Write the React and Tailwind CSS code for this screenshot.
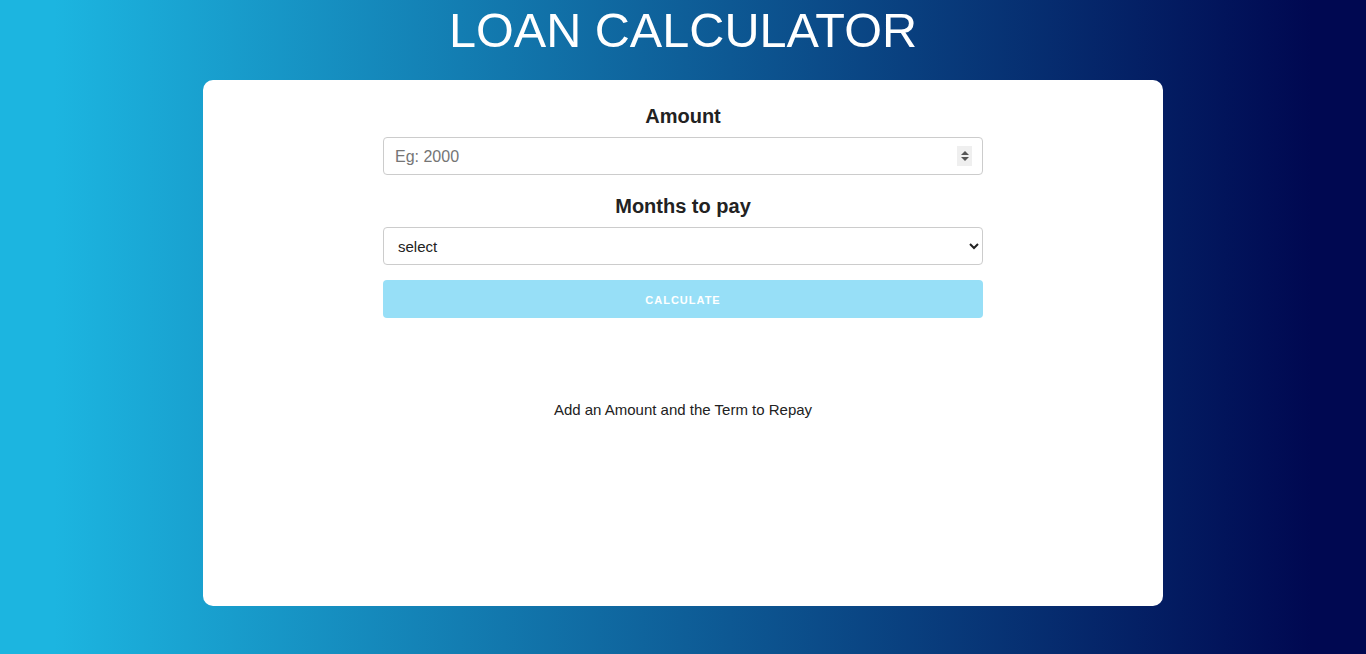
import { useState } from 'react';

export default function App() {
  const [amount, setAmount] = useState('');
  const [months, setMonths] = useState('');
  const ready = amount !== '' && months !== '';

  return (
    <div className="min-h-[654px] w-full bg-[linear-gradient(to_right,#1cb5e0_4%,#000851_96%)] pb-12 font-['Liberation_Sans',Arial,sans-serif]">
      <h1 className="pt-[2px] text-center text-[48.6px] leading-[56px] text-white">LOAN CALCULATOR</h1>

      <div className="mx-auto mt-[22px] h-[526px] w-[960px] rounded-[10px] bg-white">
        <form className="mx-auto w-[600px] pt-[24px]" onSubmit={(e) => e.preventDefault()}>
          {/* Amount */}
          <label htmlFor="amount" className="block text-center text-[20px] leading-[24px] font-bold text-[#222]">
            Amount
          </label>
          <div className="relative mt-[9px]">
            <input
              id="amount"
              type="number"
              placeholder="Eg: 2000"
              value={amount}
              onChange={(e) => setAmount(e.target.value)}
              className="block h-[38px] w-full rounded-[4px] border border-[#ccc] bg-white px-[11px] pt-[1px] text-[16px] text-[#222] [appearance:textfield] placeholder:text-[#757575] focus:outline-none [&::-webkit-inner-spin-button]:appearance-none [&::-webkit-outer-spin-button]:appearance-none"
            />
            {/* spinner, drawn since the native one only shows on hover */}
            <div className="pointer-events-none absolute top-[9px] right-[11px] flex h-[20px] w-[15px] flex-col items-center justify-center gap-[2px] bg-[#efefef]">
              <span className="h-0 w-0 border-x-[4px] border-b-[4px] border-x-transparent border-b-[#555]"></span>
              <span className="h-0 w-0 border-x-[4px] border-t-[4px] border-x-transparent border-t-[#555]"></span>
            </div>
          </div>

          {/* Months */}
          <label htmlFor="months" className="mt-[19px] block text-center text-[20px] leading-[24px] font-bold text-[#222]">
            Months to pay
          </label>
          <select
            id="months"
            value={months}
            onChange={(e) => setMonths(e.target.value)}
            className="mt-[9px] block h-[38px] w-full rounded-[4px] border border-[#ccc] bg-white px-[10px] text-[15px] text-[#222] focus:outline-none"
          >
            <option value="">select</option>
            <option value="3">3 months</option>
            <option value="6">6 months</option>
            <option value="12">12 months</option>
            <option value="24">24 months</option>
          </select>

          <button
            type="submit"
            disabled={!ready}
            className={`mt-[15px] block h-[38px] w-full rounded-[4px] pt-[2px] text-[11px] font-bold tracking-[1px] text-white uppercase ${ready ? 'bg-[#1cb5e0]' : 'bg-[#97dff7]'}`}
          >
            Calculate
          </button>
        </form>

        <p className="mt-[81px] text-center text-[15px] text-[#222]">Add an Amount and the Term to Repay</p>
      </div>
    </div>
  );
}
